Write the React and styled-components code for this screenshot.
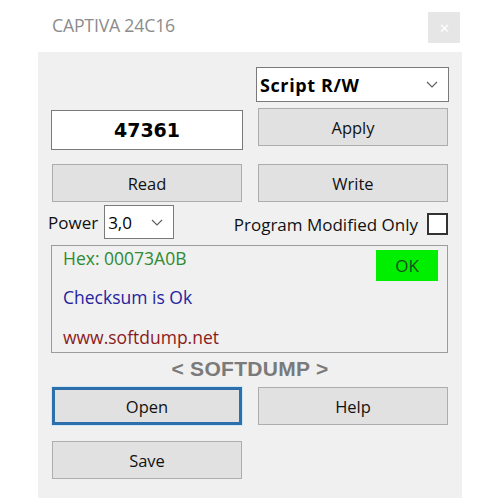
import React from 'react';
import styled, { createGlobalStyle } from 'styled-components';

const GlobalStyle = createGlobalStyle`
  html, body {
    margin: 0;
    padding: 0;
    background: #ffffff;
  }
  body {
    font-family: 'Open Sans', 'Noto Sans', sans-serif;
  }
`;

const Window = styled.div`
  width: 500px;
  height: 500px;
  background: #ffffff;
  display: flex;
  flex-direction: column;
  align-items: flex-start;
`;

const TitleBar = styled.div`
  width: 424px;
  height: 52px;
  margin-left: 38px;
  display: flex;
  align-items: flex-start;
  justify-content: space-between;
`;

const Title = styled.div`
  margin: 13px 0 0 14px;
  font-size: 17.7px;
  color: #8c8c8c;
  letter-spacing: -0.2px;
`;

const CloseButton = styled.div`
  width: 32px;
  height: 31px;
  margin: 12px 2px 0 0;
  background: #e6e6e6;
  color: #ffffff;
  font-size: 13px;
  display: flex;
  align-items: center;
  justify-content: center;
`;

const Client = styled.div`
  width: 424px;
  height: 446px;
  margin-left: 38px;
  background: #f0f0f0;
  box-sizing: border-box;
  padding: 15px 13px 0 13px;
  display: flex;
  flex-direction: column;
`;

const Row = styled.div`
  display: flex;
  justify-content: ${(p) => p.$justify || 'space-between'};
  align-items: ${(p) => p.$align || 'flex-start'};
  margin-top: ${(p) => p.$top || 0}px;
`;

const Button = styled.div`
  width: 190px;
  height: 38px;
  margin-left: ${(p) => (p.$left ? 1 : 0)}px;
  margin-right: ${(p) => (p.$left ? 0 : 1)}px;
  box-sizing: border-box;
  background: #e1e1e1;
  border: 1px solid #adadad;
  ${(p) =>
    p.$focused &&
    `
    border: 3px solid #2c6fab;
    box-shadow: 0 0 0 1px #cfe8f8;
  `}
  display: flex;
  align-items: center;
  justify-content: center;
  font-size: 16.5px;
  color: #111111;
`;

const Select = styled.div`
  width: ${(p) => p.$width}px;
  height: ${(p) => p.$height}px;
  box-sizing: border-box;
  background: #ffffff;
  border: 1px solid #7a7a7a;
  display: flex;
  align-items: center;
  justify-content: space-between;
  padding: 0 10px 0 3px;
  font-size: ${(p) => (p.$bold ? 18 : 17)}px;
  font-weight: ${(p) => (p.$bold ? 700 : 400)};
  letter-spacing: ${(p) => (p.$bold ? 0.6 : 0)}px;
  color: #000;
`;

const Chevron = () => (
  <svg width="12" height="7" viewBox="0 0 12 7">
    <path d="M1 1 L6 6 L11 1" fill="none" stroke="#606060" strokeWidth="1.2" />
  </svg>
);

const NumberBox = styled.div`
  width: 192px;
  height: 40px;
  margin-top: 2px;
  box-sizing: border-box;
  background: #ffffff;
  border: 1px solid #7a7a7a;
  display: flex;
  align-items: center;
  justify-content: center;
  font-size: 19px;
  font-weight: 700;
  font-family: 'DejaVu Sans', 'Noto Sans', sans-serif;
  color: #000;
`;

const Label = styled.span`
  font-size: 17px;
  color: #111;
`;

const PowerGroup = styled.div`
  display: flex;
  align-items: center;
  gap: 6px;
  margin-left: -3px;
`;

const ModifiedGroup = styled.div`
  display: flex;
  align-items: center;
  gap: 9px;
  margin-top: 4px;
  margin-right: 1px;
`;

const CheckBox = styled.div`
  width: 21px;
  height: 22px;
  box-sizing: border-box;
  background: #fff;
  border: 2px solid #333;
`;

const Status = styled.div`
  margin-top: 6px;
  width: 397px;
  height: 108px;
  box-sizing: border-box;
  border: 1px solid #9c9c9c;
  position: relative;
  padding: 1px 0 0 11px;
  display: flex;
  flex-direction: column;
`;

const StatusLine = styled.div`
  font-size: 17.5px;
  height: 22px;
  line-height: 22px;
  margin-bottom: ${(p) => p.$gap || 0}px;
  color: ${(p) => p.$color};
`;

const OkBadge = styled.div`
  position: absolute;
  right: 9px;
  top: 4px;
  width: 62px;
  height: 31px;
  background: #00ee00;
  display: flex;
  align-items: center;
  justify-content: center;
  font-size: 17px;
  color: #1d4a1d;
`;

const Brand = styled.div`
  margin-top: 4px;
  text-align: center;
  font-family: 'Liberation Sans', Arial, sans-serif;
  font-weight: 700;
  font-size: 21px;
  color: #7a7a7a;
  letter-spacing: 0.3px;
`;

export default function App() {
  return (
    <>
      <GlobalStyle />
      <Window>
        <TitleBar>
          <Title>CAPTIVA 24C16</Title>
          <CloseButton>✕</CloseButton>
        </TitleBar>
        <Client>
          <Row $justify="flex-end">
            <Select $width={193} $height={35} $bold>
              Script R/W
              <Chevron />
            </Select>
          </Row>
          <Row $top={6}>
            <NumberBox>47361</NumberBox>
            <Button>Apply</Button>
          </Row>
          <Row $top={14}>
            <Button $left>Read</Button>
            <Button>Write</Button>
          </Row>
          <Row $top={3} $align="center">
            <PowerGroup>
              <Label>Power</Label>
              <Select $width={70} $height={34}>
                3,0
                <Chevron />
              </Select>
            </PowerGroup>
            <ModifiedGroup>
              <Label>Program Modified Only</Label>
              <CheckBox />
            </ModifiedGroup>
          </Row>
          <Status>
            <StatusLine $color="#2f8a32" $gap={17}>Hex: 00073A0B</StatusLine>
            <StatusLine $color="#2424a0" $gap={18}>Checksum is Ok</StatusLine>
            <StatusLine $color="#8a1c1c">www.softdump.net</StatusLine>
            <OkBadge>OK</OkBadge>
          </Status>
          <Brand>&lt; SOFTDUMP &gt;</Brand>
          <Row $top={6}>
            <Button $left $focused>Open</Button>
            <Button>Help</Button>
          </Row>
          <Row $top={16}>
            <Button $left>Save</Button>
          </Row>
        </Client>
      </Window>
    </>
  );
}
